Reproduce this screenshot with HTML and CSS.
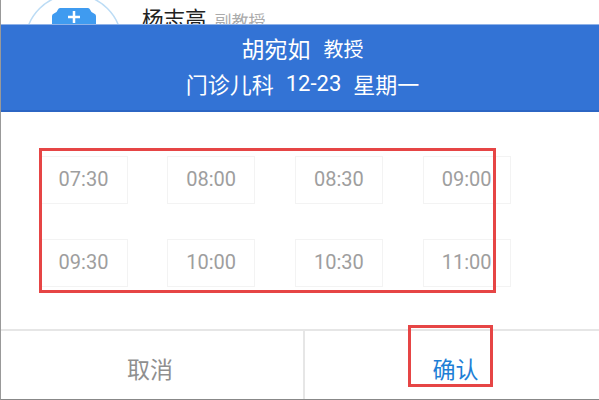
FILE: index.html
```html
<!DOCTYPE html>
<html lang="zh">
<head>
<meta charset="utf-8">
<title>预约时间</title>
<link rel="stylesheet" href="styles.css">
</head>
<body>
<div class="page">
  <div class="behind">
    <svg class="avatar" width="110" height="24" viewBox="0 0 110 24">
      <circle cx="46.500" cy="42.500" r="48" fill="#fff" stroke="#bcdcf5" stroke-width="1.500"/>
      <path d="M25 24V16Q25 14 27 13.500Q30 12.500 31 9.500Q31.500 8 33 8H61Q62.500 8 63 9.500Q64 12.500 67 13.500Q69 14 69 16V24Z" fill="#3f9bf0"/>
      <path d="M47 11V23M41 17H53" stroke="#fff" stroke-width="2.500" fill="none"/>
    </svg>
    <span class="name">杨志高</span>
    <span class="rank">副教授</span>
  </div>
  <header class="head">
    <div class="line"><span class="doctor">胡宛如</span><span class="title">教授</span></div>
    <div class="line sub"><span>门诊儿科</span><span class="date">12-23</span><span>星期一</span></div>
  </header>
  <main class="slots">
    <div class="slot">07:30</div>
    <div class="slot">08:00</div>
    <div class="slot">08:30</div>
    <div class="slot">09:00</div>
    <div class="slot">09:30</div>
    <div class="slot">10:00</div>
    <div class="slot">10:30</div>
    <div class="slot">11:00</div>
  </main>
  <footer class="foot">
    <div class="btn cancel">取消</div>
    <div class="btn ok">确认</div>
  </footer>
  <div class="mark mark-slots"></div>
  <div class="mark mark-ok"></div>
</div>
</body>
</html>
```
FILE: styles.css
```css
* { box-sizing: border-box; }
html, body { margin: 0; padding: 0; background: #fff; }
.page {
  position: relative;
  width: 599px;
  height: 400px;
  overflow: hidden;
  display: flex;
  flex-direction: column;
  border-left: 1px solid #999;
  border-bottom: 1px solid #888;
  font-family: Roboto, "Noto Sans CJK SC", sans-serif;
}
.behind {
  height: 24px;
  flex: none;
  overflow: hidden;
  display: flex;
  align-items: flex-start;
  padding-left: 26px;
}
.avatar { flex: none; }
.name { margin-left: 5px; font-size: 21.500px; line-height: 40px; color: #222; white-space: nowrap; }
.rank { margin-left: 8px; font-size: 17px; line-height: 44px; color: #aaa; white-space: nowrap; }
.head {
  height: 88px;
  flex: none;
  background: #3373d5;
  border-top: 1px solid #8fb2e8;
  border-bottom: 2px solid #2c66c4;
  color: #fff;
  display: flex;
  flex-direction: column;
  align-items: center;
  padding: 6px 0 0 5px;
}
.line { display: flex; align-items: center; height: 34px; white-space: nowrap; }
.doctor { font-size: 23px; }
.title { font-size: 20px; margin-left: 13px; }
.sub { font-size: 22px; height: 36px; }
.date { font-size: 22px; margin: 0 12px; }
.slots {
  flex: none;
  height: 217px;
  display: grid;
  grid-template-columns: repeat(4, 88px);
  grid-auto-rows: 48px;
  column-gap: 39.700px;
  row-gap: 35px;
  padding: 44px 0 0 38.500px;
}
.slot {
  border: 1px solid #f3f3f3;
  display: flex;
  align-items: center;
  justify-content: center;
  font-size: 20px;
  color: #9e9e9e;
  padding-bottom: 3px;
}
.foot {
  flex: 1;
  display: flex;
  border-top: 2px solid #e6e6e6;
}
.btn {
  display: flex;
  align-items: center;
  justify-content: center;
  font-size: 23px;
  padding-top: 6px;
}
.cancel { width: 304px; padding-right: 4px; color: #8f8f8f; border-right: 2px solid #e6e6e6; }
.ok { flex: 1; padding-left: 7px; color: #1e7fd6; }
.mark { position: absolute; border: 3px solid #e64545; pointer-events: none; }
.mark-slots { left: 38px; top: 148px; width: 457px; height: 145px; }
.mark-ok { left: 407px; top: 325px; width: 85px; height: 62px; }
```
